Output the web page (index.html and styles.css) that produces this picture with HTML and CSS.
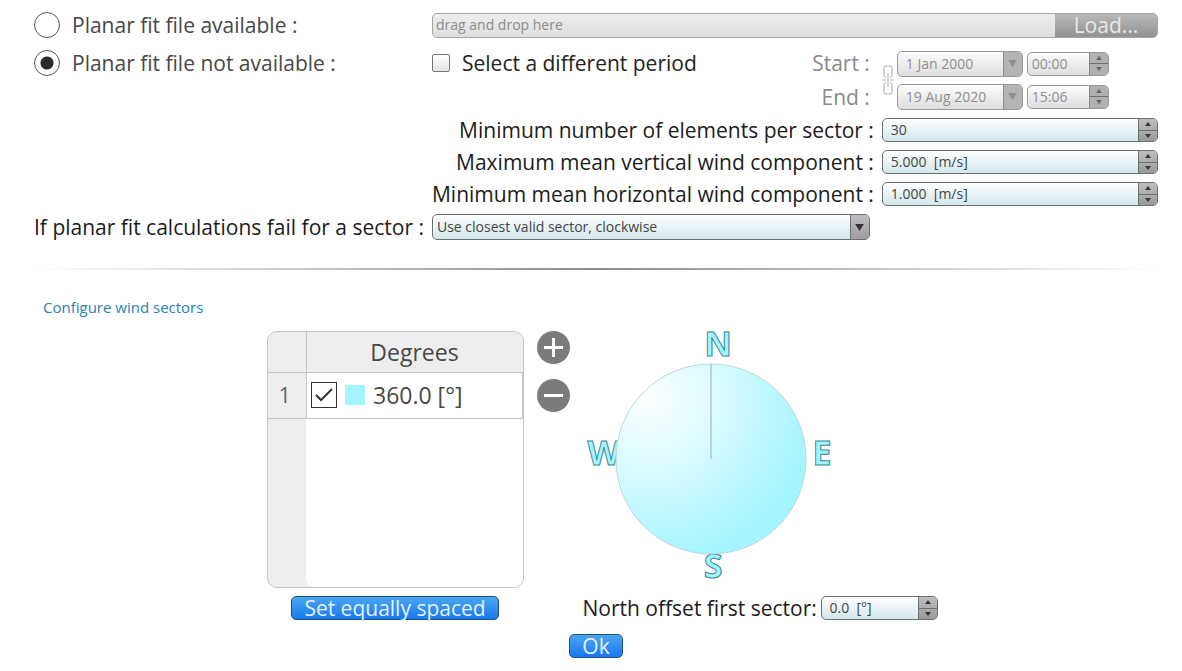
FILE: index.html
```html
<!DOCTYPE html>
<html lang="en">
<head>
<meta charset="utf-8">
<title>Planar fit settings</title>
<link rel="stylesheet" href="styles.css">
</head>
<body>
<form class="page">
  <section class="settings">
    <label class="choice"><input class="radio" type="radio" name="file">Planar fit file available :</label>
    <div class="loader">
      <input class="field-text" type="text" placeholder="drag and drop here" aria-label="Planar fit file" disabled>
      <button class="load" type="button" disabled>Load...</button>
    </div>

    <label class="choice choice-top"><input class="radio" type="radio" name="file" checked>Planar fit file not available :</label>
    <div class="period">
      <label class="choice period-choice"><input class="box" type="checkbox">Select a different period</label>
      <div class="period-labels">
        <label for="start">Start :</label>
        <label for="end">End :</label>
      </div>
    </div>
    <div class="dates">
      <svg class="chain" viewBox="0 0 12 32" aria-hidden="true"><path d="M2 12V4Q2 2 4 2H8Q10 2 10 4V12L8 14M2 12L4 14M2 20V28Q2 30 4 30H8Q10 30 10 28V20L8 18M2 20L4 18M6 9V23M1 16H4M8 16H11"/></svg>
      <div class="date-rows">
        <div class="date-row">
          <div class="field date off"><input class="field-text" id="start" type="text" value="1 Jan 2000" disabled><button class="drop" type="button" aria-label="Choose start date" disabled><svg class="arrow-big" viewBox="0 0 10 8"><path d="M0 0H10L5 8Z"/></svg></button></div>
          <div class="field time off"><input class="field-text" type="text" value="00:00" aria-label="Start time" disabled><span class="spin"><button type="button" aria-label="Later" disabled><svg class="arrow" viewBox="0 0 6 4"><path d="M0 4H6L3 0Z"/></svg></button><button type="button" aria-label="Earlier" disabled><svg class="arrow" viewBox="0 0 6 4"><path d="M0 0H6L3 4Z"/></svg></button></span></div>
        </div>
        <div class="date-row">
          <div class="field date off"><input class="field-text" id="end" type="text" value="19 Aug 2020" disabled><button class="drop" type="button" aria-label="Choose end date" disabled><svg class="arrow-big" viewBox="0 0 10 8"><path d="M0 0H10L5 8Z"/></svg></button></div>
          <div class="field time off"><input class="field-text" type="text" value="15:06" aria-label="End time" disabled><span class="spin"><button type="button" aria-label="Later" disabled><svg class="arrow" viewBox="0 0 6 4"><path d="M0 4H6L3 0Z"/></svg></button><button type="button" aria-label="Earlier" disabled><svg class="arrow" viewBox="0 0 6 4"><path d="M0 0H6L3 4Z"/></svg></button></span></div>
        </div>
      </div>
    </div>

    <label class="name" for="elements">Minimum number of elements per sector :</label>
    <div class="field"><input class="field-text" id="elements" type="text" value="30"><span class="spin"><button type="button" aria-label="Increase"><svg class="arrow" viewBox="0 0 6 4"><path d="M0 4H6L3 0Z"/></svg></button><button type="button" aria-label="Decrease"><svg class="arrow" viewBox="0 0 6 4"><path d="M0 0H6L3 4Z"/></svg></button></span></div>
    <label class="name" for="vertical">Maximum mean vertical wind component :</label>
    <div class="field"><input class="field-text" id="vertical" type="text" value="5.000  [m/s]"><span class="spin"><button type="button" aria-label="Increase"><svg class="arrow" viewBox="0 0 6 4"><path d="M0 4H6L3 0Z"/></svg></button><button type="button" aria-label="Decrease"><svg class="arrow" viewBox="0 0 6 4"><path d="M0 0H6L3 4Z"/></svg></button></span></div>
    <label class="name" for="horizontal">Minimum mean horizontal wind component :</label>
    <div class="field"><input class="field-text" id="horizontal" type="text" value="1.000  [m/s]"><span class="spin"><button type="button" aria-label="Increase"><svg class="arrow" viewBox="0 0 6 4"><path d="M0 4H6L3 0Z"/></svg></button><button type="button" aria-label="Decrease"><svg class="arrow" viewBox="0 0 6 4"><path d="M0 0H6L3 4Z"/></svg></button></span></div>

    <label class="fail-name" for="fail">If planar fit calculations fail for a sector :</label>
    <div class="field select-field">
      <select class="select" id="fail"><option>Use closest valid sector, clockwise</option></select>
      <span class="drop"><svg class="arrow-big" viewBox="0 0 10 8"><path d="M0 0H10L5 8Z"/></svg></span>
    </div>
  </section>

  <hr class="rule">
  <a class="heading" href="#sectors">Configure wind sectors</a>

  <section class="sectors" id="sectors">
    <div class="table-frame">
      <table class="table">
        <thead><tr><th class="index"></th><th>Degrees</th></tr></thead>
        <tbody>
          <tr>
            <th class="index" scope="row">1</th>
            <td><label class="sector"><input class="tick" type="checkbox" checked><span class="swatch"></span>360.0 [°]</label></td>
          </tr>
        </tbody>
      </table>
      <div class="table-rest"></div>
    </div>
    <div class="tools">
      <button class="round" type="button" aria-label="Add sector"><svg viewBox="0 0 33 33"><path d="M7 16.5H26M16.5 7V26"/></svg></button>
      <button class="round" type="button" aria-label="Remove sector"><svg viewBox="0 0 33 33"><path d="M7 16.5H26"/></svg></button>
    </div>
    <svg class="compass" viewBox="0 0 257 257" role="img" aria-label="Wind sectors">
      <defs>
        <radialGradient id="shine" gradientUnits="userSpaceOnUse" cx="66" cy="68" r="166">
          <stop offset="0" stop-color="#fff"/><stop offset="1" stop-color="#a4f5ff"/>
        </radialGradient>
      </defs>
      <g class="letters">
        <text x="135" y="25" text-anchor="middle">N</text>
        <text x="21" y="134" text-anchor="middle">W</text>
        <text x="239" y="134" text-anchor="middle">E</text>
        <text x="130" y="247" text-anchor="middle">S</text>
      </g>
      <circle cx="128" cy="128" r="95" fill="url(#shine)" stroke="#bcd8dd"/>
      <path d="M128 33V128" stroke="#bdd2d6" stroke-width="2"/>
    </svg>
    <button class="action spaced" type="button">Set equally spaced</button>
    <div class="offset">
      <label for="north">North offset first sector:</label>
      <div class="field north"><input class="field-text" id="north" type="text" value="0.0  [°]"><span class="spin"><button type="button" aria-label="Increase"><svg class="arrow" viewBox="0 0 6 4"><path d="M0 4H6L3 0Z"/></svg></button><button type="button" aria-label="Decrease"><svg class="arrow" viewBox="0 0 6 4"><path d="M0 0H6L3 4Z"/></svg></button></span></div>
    </div>
  </section>
  <button class="action ok" type="submit">Ok</button>
</form>
</body>
</html>
```
FILE: styles.css
```css
* { box-sizing: border-box; }
body {
  margin: 0;
  background: #fff;
  color: #1c1c1c;
  font: 21px/24px "Open Sans", "Noto Sans", sans-serif;
}
button, input, select { margin: 0; padding: 0; font: inherit; color: inherit; }
svg { display: block; }

.page { display: flex; flex-direction: column; padding: 12px 24px 12px 34px; }

.settings {
  display: grid;
  grid-template-columns: max-content max-content 1fr;
  gap: 8px;
  align-items: center;
}
.choice { display: flex; align-items: center; gap: 12px; color: #484848; white-space: nowrap; }
.choice-top { align-self: start; margin-top: 4px; height: 26px; }
.radio {
  appearance: none;
  width: 26px;
  height: 26px;
  border: 1px solid #555;
  border-radius: 50%;
  background: #fff;
}
.radio:checked { background: radial-gradient(circle, #2c2c2c 6px, #fff 7px); }
.box {
  appearance: none;
  width: 18px;
  height: 18px;
  border: 1px solid #777;
  border-radius: 2px;
  background: linear-gradient(#fff, #e4e4e4);
}

.loader {
  grid-column: 2 / 4;
  display: flex;
  height: 25px;
  border: 1px solid #a6a6a6;
  border-radius: 5px;
  background: linear-gradient(#eee, #dedede);
}
.loader .field-text { padding-left: 3px; color: #8c8c8c; }
.loader .field-text::placeholder { color: #8c8c8c; opacity: 1; }
.load {
  width: 102px;
  border: 0;
  border-radius: 0 4px 4px 0;
  background: linear-gradient(#b9b9b9, #929292);
  color: #e8e8e8;
  line-height: 22px;
}

.period { display: flex; justify-content: space-between; align-self: start; margin-top: 4px; padding-right: 4px; }
.period-choice { height: 26px; color: #222; }
.period-labels { display: flex; flex-direction: column; gap: 8px; text-align: right; color: #8a8a8a; line-height: 26px; }
.dates { display: flex; align-items: center; gap: 3px; margin-top: 4px; }
.chain { width: 12px; height: 32px; fill: none; stroke: #aaa; }
.date-rows { display: flex; flex-direction: column; gap: 7px; }
.date-row { display: flex; align-items: center; gap: 4px; }

.field {
  display: flex;
  height: 24px;
  border: 1px solid #6c7072;
  border-radius: 5px;
  background: linear-gradient(#fff, #d3e7ec);
  color: #444;
  overflow: hidden;
}
.field-text {
  flex: 1;
  min-width: 0;
  padding-left: 8px;
  border: 0;
  background: none;
  outline: 0;
  font-size: 14px;
  line-height: 20px;
  white-space: pre;
}
.field.off { border-color: #999; background: linear-gradient(#fcfcfc, #dedede); color: #8f8f8f; }
.date { width: 126px; height: 26px; }
.time { width: 82px; }
.time .field-text { padding-left: 4px; }
.spin { display: flex; flex-direction: column; width: 19px; border-left: 1px solid #6c7072; background: linear-gradient(#c0bec0, #9a9a9a); }
.spin button { flex: 1; display: grid; place-items: center; border: 0; background: none; color: #333; }
.spin button + button { border-top: 1px solid #6c7072; }
.arrow { width: 6px; height: 4px; fill: currentColor; }
.drop { display: grid; place-items: center; width: 19px; border: 0; border-left: 1px solid #6c7072; background: linear-gradient(#c0bec0, #9f9d9f); color: #333; }
.arrow-big { width: 9px; height: 7px; fill: currentColor; }
.off .drop { background: #b4b4b4; color: #8e8e8e; border-color: #8e8e8e; }
.off .spin { background: #b0b0b0; border-color: #888; }
.off .spin button { color: #666; }

.name { grid-column: 2; text-align: right; white-space: nowrap; }
.fail-name { text-align: right; white-space: nowrap; }
.select-field { height: 26px; margin-right: 4px; }
.select { appearance: none; flex: 1; min-width: 0; padding: 0 4px; border: 0; background: none; font-size: 14px; outline: 0; }
.select-field .drop { pointer-events: none; }

.rule {
  width: 100%;
  height: 2px;
  margin: 28px 0 0;
  border: 0;
  background: linear-gradient(90deg, #fff 0%, #8e8a8e 50%, #fff 100%);
}
.heading { align-self: flex-start; margin: 25px 0 12px 9px; font-size: 15px; color: #2a82b4; text-decoration: none; }

.sectors {
  align-self: center;
  display: grid;
  grid-template-columns: 257px 33px 355px;
  gap: 8px 13px;
  margin-left: 12px;
}
.table-frame {
  display: flex;
  flex-direction: column;
  height: 257px;
  border: 1px solid #c4c4c4;
  border-radius: 10px;
  background: #eee;
  overflow: hidden;
}
.table { width: 100%; border-collapse: collapse; color: #484848; font-size: 23px; }
.table th { padding: 0; background: #eee; font-weight: 400; }
.table thead th { height: 40px; border-bottom: 1px solid #c4c4c4; }
.table tbody th, .table td { height: 46px; padding: 0; border-bottom: 1px solid #c4c4c4; }
.table .index { width: 39px; border-right: 1px solid #c4c4c4; font-size: 21px; color: #666; }
.table tbody .index { padding-right: 4px; }
.table td { background: #fff; border-right: 1px solid #c4c4c4; }
.sector { display: flex; align-items: center; gap: 8px; padding-left: 4px; }
.tick {
  appearance: none;
  width: 26px;
  height: 26px;
  border: 1px solid #333;
  background: #fff;
}
.tick:checked {
  background: url("data:image/svg+xml,%3Csvg xmlns='http://www.w3.org/2000/svg' viewBox='0 0 24 24'%3E%3Cpath d='M4 12L9 17L20 6' fill='none' stroke='%23333' stroke-width='2'/%3E%3C/svg%3E") center / 24px no-repeat #fff;
}
.swatch { width: 20px; height: 20px; background: #a4f5ff; }
.table-rest { flex: 1; margin-left: 38px; border-bottom-left-radius: 8px; background: #fff; }

.tools { display: flex; flex-direction: column; gap: 15px; }
.round { width: 33px; height: 33px; border: 0; border-radius: 50%; background: #7b7b7b; }
.round svg { fill: none; stroke: #fff; stroke-width: 3; }

.compass { width: 257px; height: 257px; overflow: visible; }
.letters { font-size: 34px; font-weight: 700; fill: #a4f5ff; stroke: #35899a; stroke-width: 1; }

.action {
  height: 24px;
  border: 1px solid #24507c;
  border-radius: 5px;
  background: linear-gradient(#4ba7f0, #1877f2);
  color: #e6f1ff;
  line-height: 22px;
}
.spaced { justify-self: center; width: 208px; }
.offset { grid-column: 3; display: flex; align-items: center; justify-content: space-between; white-space: nowrap; }
.north { width: 117px; }
.ok { align-self: center; width: 54px; margin-top: 14px; }
```
